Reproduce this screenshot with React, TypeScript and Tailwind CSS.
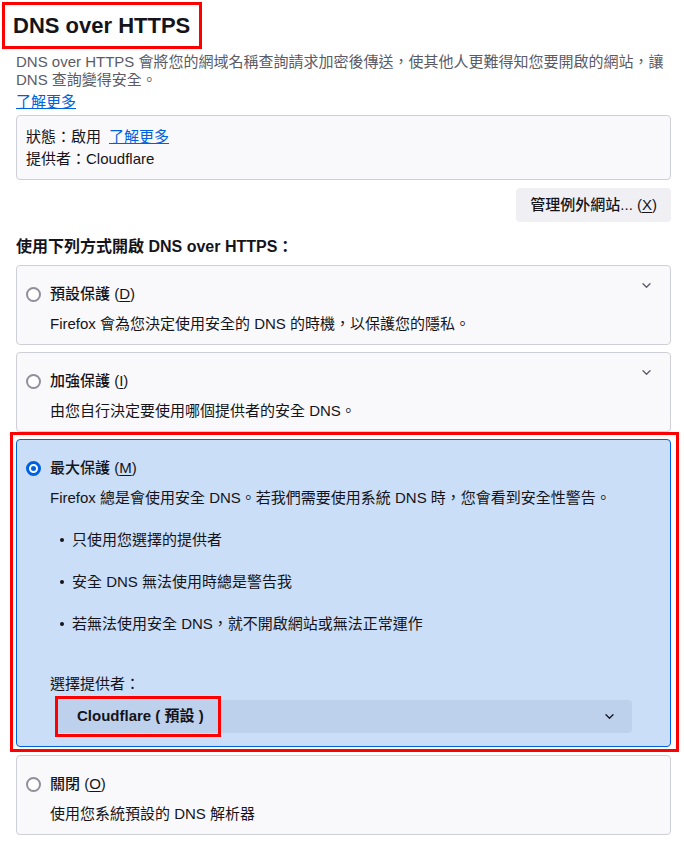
import type { ReactNode } from "react";

const FONT = "font-['Liberation_Sans','Noto_Sans_CJK_TC',sans-serif]";

function Chevron({ color = "#5b5b66" }: { color?: string }) {
  return (
    <svg width="9" height="5" viewBox="0 0 9 5" fill="none">
      <path d="M1 0.8l3.5 3.4 3.5-3.4" stroke={color} strokeWidth="1.3" strokeLinecap="round" strokeLinejoin="round" />
    </svg>
  );
}

function Radio({ checked }: { checked?: boolean }) {
  if (checked) {
    return (
      <span className="w-[15px] h-[15px] shrink-0 rounded-full border-[3px] border-[#0061e0] bg-white flex items-center justify-center">
        <span className="w-[5px] h-[5px] rounded-full bg-[#0061e0]" />
      </span>
    );
  }
  return <span className="w-[15px] h-[15px] shrink-0 rounded-full border-2 border-[#8f8f9d] bg-white" />;
}

function Label({ text, k }: { text: string; k: string }) {
  return (
    <span className="text-[15px] font-medium leading-[22px]">
      {text} (<span className="underline underline-offset-2">{k}</span>)
    </span>
  );
}

function OptionCard({
  text,
  k,
  desc,
  checked,
  chevron,
  className = "",
  children,
}: {
  text: string;
  k: string;
  desc: string;
  checked?: boolean;
  chevron?: boolean;
  className?: string;
  children?: ReactNode;
}) {
  return (
    <div
      className={`relative rounded-[4px] border px-[9px] pt-[17px] ${
        checked ? "border-[#0061e0] bg-[#cadef7] pb-[13px]" : "border-[#cfcfd8] bg-[#f9f9fb] pb-[9px]"
      } ${className}`}
    >
      <div className="flex items-center gap-[9px]">
        <Radio checked={checked} />
        <Label text={text} k={k} />
      </div>
      {chevron && (
        <div className="absolute top-[17px] right-[19px]">
          <Chevron />
        </div>
      )}
      <div className="ml-[24px] mt-[8px] text-[15px] leading-[22px]">{desc}</div>
      {children}
    </div>
  );
}

export default function App() {
  const bullets = ["只使用您選擇的提供者", "安全 DNS 無法使用時總是警告我", "若無法使用安全 DNS，就不開啟網站或無法正常運作"];

  return (
    <div lang="zh-TW" className={`${FONT} w-[684px] min-h-[844px] bg-white text-[#15141a] pl-[16px] pr-[13px] pt-[2px]`}>
      {/* title */}
      <div className="-ml-[14px] inline-flex h-[47px] items-center border-[3px] border-[#ff0000] pl-[8px] pr-[9px]">
        <h1 className="text-[22px] font-semibold leading-none">DNS over HTTPS</h1>
      </div>

      <p className="mt-[4px] text-[15px] leading-[18px] text-[#5b5b66]">
        DNS over HTTPS 會將您的網域名稱查詢請求加密後傳送，使其他人更難得知您要開啟的網站，讓 DNS 查詢變得安全。
      </p>
      <a className="mt-[2px] block w-fit text-[15px] leading-[22px] text-[#0061e0] underline">了解更多</a>

      {/* status */}
      <div className="mt-[2px] rounded-[4px] border border-[#cfcfd8] bg-[#f9f9fb] px-[9px] pt-[10px] pb-[9px] text-[15px] leading-[22px]">
        <div>
          狀態：啟用
          <a className="ml-[8px] text-[#0061e0] underline">了解更多</a>
        </div>
        <div>提供者：Cloudflare</div>
      </div>

      <div className="mt-[8px] flex justify-end">
        <button className="h-[34px] rounded-[4px] bg-[#f0f0f4] px-[14px] text-[15px] font-medium">
          管理例外網站... (<span className="underline underline-offset-2">X</span>)
        </button>
      </div>

      <h2 className="mt-[14px] text-[16px] font-semibold leading-[22px]">使用下列方式開啟 DNS over HTTPS：</h2>

      <div className="mt-[7px] flex flex-col">
        <OptionCard text="預設保護" k="D" desc="Firefox 會為您決定使用安全的 DNS 的時機，以保護您的隱私。" chevron />
        <OptionCard className="mt-[7px]" text="加強保護" k="I" desc="由您自行決定要使用哪個提供者的安全 DNS。" chevron />

        <div className="-ml-[6px] -mr-[8px] border-[3px] border-[#ff0000] pl-[3px] pr-[5px] pt-[4px] pb-[2px]">
          <OptionCard
            checked
            text="最大保護"
            k="M"
            desc="Firefox 總是會使用安全 DNS。若我們需要使用系統 DNS 時，您會看到安全性警告。"
          >
            <ul className="ml-[24px] mt-[20px] flex flex-col gap-[20px]">
              {bullets.map((b) => (
                <li key={b} className="flex items-center gap-[8px] pl-[10px] text-[15px] leading-[22px]">
                  <span className="h-[4px] w-[4px] rounded-full bg-[#15141a]" />
                  {b}
                </li>
              ))}
            </ul>
            <div className="ml-[24px] mt-[38px] text-[15px] leading-[22px]">選擇提供者：</div>
            <div className="relative ml-[30px] mr-[29px] mt-[5px] flex h-[33px] items-center justify-between rounded-[4px] bg-[#bdd0ec] pl-[21px] pr-[18px]">
              <span className="text-[15px] font-semibold">Cloudflare ( 預設 )</span>
              <Chevron color="#15141a" />
              <div className="absolute -left-[1px] -top-[4px] h-[41px] w-[166px] border-[3px] border-[#ff0000]" />
            </div>
          </OptionCard>
        </div>

        <OptionCard className="mt-[3px]" text="關閉" k="O" desc="使用您系統預設的 DNS 解析器" />
      </div>
    </div>
  );
}
